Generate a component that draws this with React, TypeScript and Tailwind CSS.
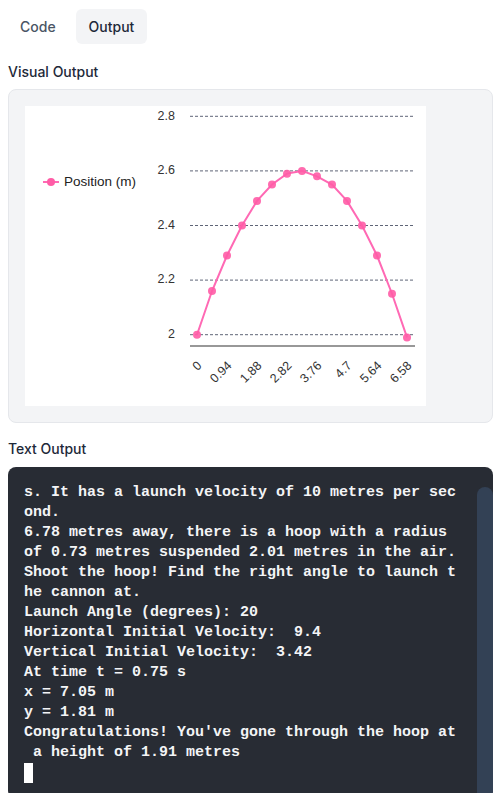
import React from "react";

const lines = [
  "s. It has a launch velocity of 10 metres per sec",
  "ond.",
  "6.78 metres away, there is a hoop with a radius",
  "of 0.73 metres suspended 2.01 metres in the air.",
  "Shoot the hoop! Find the right angle to launch t",
  "he cannon at.",
  "Launch Angle (degrees): 20",
  "Horizontal Initial Velocity:  9.4",
  "Vertical Initial Velocity:  3.42",
  "At time t = 0.75 s",
  "x = 7.05 m",
  "y = 1.81 m",
  "Congratulations! You've gone through the hoop at",
  " a height of 1.91 metres",
];

function Chart() {
  const yOf = (v: number) => 228.7 - (v - 2) * 273;
  const pts = Array.from({ length: 15 }, (_, i) => {
    const x = i * 0.47;
    const t = x / 9.4;
    const y = Math.round((2 + 3.42 * t - 4.9 * t * t) * 100) / 100;
    return { px: 172 + i * 15, py: yOf(y) };
  });
  const yTicks = [
    { v: 2.8, l: "2.8" },
    { v: 2.6, l: "2.6" },
    { v: 2.4, l: "2.4" },
    { v: 2.2, l: "2.2" },
    { v: 2.0, l: "2" },
  ];
  const xTicks = ["0", "0.94", "1.88", "2.82", "3.76", "4.7", "5.64", "6.58"];
  const font = "'Liberation Sans', Arial, sans-serif";
  return (
    <svg width="401" height="300" viewBox="0 0 401 300" className="block">
      <rect x="0" y="0" width="401" height="300" fill="#ffffff" />
      {yTicks.map((t) => (
        <g key={t.l}>
          <line
            x1="165"
            x2="390"
            y1={yOf(t.v)}
            y2={yOf(t.v)}
            stroke="#5f6577"
            strokeWidth="1"
            strokeDasharray="3 2"
          />
          <text
            x="150"
            y={yOf(t.v)}
            textAnchor="end"
            dominantBaseline="middle"
            fontSize="12.5"
            fill="#333"
            fontFamily={font}
          >
            {t.l}
          </text>
        </g>
      ))}
      <line x1="165" x2="390" y1="240" y2="240" stroke="#333" strokeWidth="1.2" />
      {xTicks.map((l, i) => {
        const x = 172 + i * 30;
        return (
          <text
            key={l}
            transform={`translate(${x + 3}, 258) rotate(-45)`}
            textAnchor="end"
            dominantBaseline="middle"
            fontSize="12.5"
            fill="#333"
            fontFamily={font}
          >
            {l}
          </text>
        );
      })}
      <polyline
        points={pts.map((p) => `${p.px},${p.py}`).join(" ")}
        fill="none"
        stroke="#ff69b4"
        strokeWidth="2"
      />
      {pts.map((p, i) => (
        <circle key={i} cx={p.px} cy={p.py} r="4" fill="#ff5ca6" fillOpacity="0.9" />
      ))}
      <line x1="18" x2="34" y1="76" y2="76" stroke="#ff69b4" strokeWidth="2" />
      <circle cx="26" cy="76" r="4" fill="#ff5ca6" />
      <text
        x="39"
        y="76"
        dominantBaseline="middle"
        fontSize="13.5"
        fill="#222"
        fontFamily={font}
      >
        Position (m)
      </text>
    </svg>
  );
}

export default function App() {
  return (
    <div
      className="bg-white pl-2 pr-1 pt-[9px] min-h-[793px]"
      style={{ fontFamily: "Inter, 'Noto Sans', sans-serif" }}
    >
      <div className="flex gap-2">
        <div className="px-3 h-[35px] flex items-center rounded-md text-sm font-medium text-gray-600">
          Code
        </div>
        <div className="px-[13px] h-[35px] flex items-center rounded-md bg-gray-100 text-sm font-medium text-gray-800">
          Output
        </div>
      </div>
      <div className="mt-[18px] text-sm font-medium text-gray-800 leading-5">Visual Output</div>
      <div className="mt-[7px] rounded-lg border border-gray-200 bg-gray-100 p-4 h-[334px]">
        <Chart />
      </div>
      <div className="mt-4 text-sm font-medium text-gray-800 leading-5">Text Output</div>
      <div className="mt-2 flex rounded-lg bg-[#282c34] overflow-hidden">
        <div
          className="flex-1 pl-4 pt-4 pb-4 text-[15px] leading-5 font-bold text-gray-100 whitespace-pre"
          style={{ fontFamily: "'Liberation Mono', 'Courier New', monospace" }}
        >
          {lines.map((l, i) => (
            <div key={i} className="h-5">
              {l}
            </div>
          ))}
          <div className="h-5">
            <span className="inline-block w-[9px] h-5 bg-white align-top" />
          </div>
        </div>
        <div className="w-4 pt-5 flex">
          <div className="flex-1 bg-[#334155] rounded-t-full" />
        </div>
      </div>
    </div>
  );
}
